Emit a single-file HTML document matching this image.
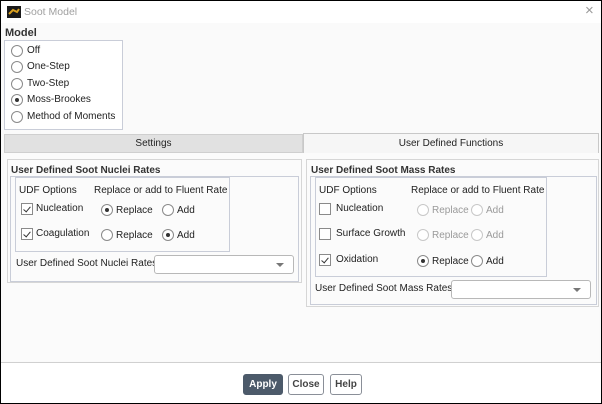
<!DOCTYPE html>
<html><head><meta charset="utf-8"><style>
*{box-sizing:border-box;margin:0;padding:0}
body{width:602px;height:404px;overflow:hidden;font-family:"Liberation Sans","DejaVu Sans",sans-serif;font-size:10px;color:#222;background:#000}
#w{position:absolute;left:0;top:0;width:602px;height:404px;border:1px solid #000;background:#fafafa}
.a{position:absolute;white-space:nowrap}
.box{position:absolute;border:1px solid #c9cdd8}
.r{position:absolute;width:12px;height:12px;border:1px solid #8a8a8a;border-radius:50%;background:#fff}
.r.on::after{content:"";position:absolute;left:3px;top:3px;width:4px;height:4px;border-radius:50%;background:#333}
.r.dis{border-color:#c8c8c8}
.c{position:absolute;width:12px;height:12px;border:1px solid #8a8a8a;background:#fff}
.c.k::after{content:"";position:absolute;left:3px;top:1px;width:3px;height:6px;border:solid #333;border-width:0 1.5px 1.5px 0;transform:rotate(40deg)}
.g{color:#9a9a9a}
.b{font-weight:bold;color:#333}
.dd{position:absolute;height:19px;border:1px solid #b8b8b8;border-radius:3px;background:#fff}
.dd::after{content:"";position:absolute;right:9px;top:7px;border-left:4px solid transparent;border-right:4px solid transparent;border-top:4px solid #777}
.btn{position:absolute;top:373px;height:21px;border:1px solid #8a8f98;border-radius:3px;background:#fff;font-weight:bold;text-align:center;line-height:19px;color:#444}
</style></head><body><div id="w">
<div class="a" style="left:0;top:0;width:600px;height:22px;background:#fff"></div>
<svg class="a" style="left:6px;top:5px" width="14" height="12"><rect width="14" height="12" fill="#1a1a1a"/><path d="M2 8 L6 4 L10 6 L12 3" stroke="#d9a020" stroke-width="2" fill="none"/></svg>
<div class="a" style="left:23px;top:5px;color:#a0a0a0;font-size:10.5px">Soot Model</div>
<div class="a" style="left:584px;top:1px;color:#999;font-size:15px">×</div>

<div class="a b" style="left:4px;top:26px;font-size:11px">Model</div>
<div class="box" style="left:3px;top:39px;width:119px;height:90px;background:#fff"></div>
<div class="r" style="left:10px;top:44px"></div><div class="a" style="left:26px;top:44px">Off</div>
<div class="r" style="left:10px;top:60px"></div><div class="a" style="left:26px;top:60px">One-Step</div>
<div class="r" style="left:10px;top:77px"></div><div class="a" style="left:26px;top:77px">Two-Step</div>
<div class="r on" style="left:10px;top:93px"></div><div class="a" style="left:26px;top:93px">Moss-Brookes</div>
<div class="r" style="left:10px;top:110px"></div><div class="a" style="left:26px;top:110px">Method of Moments</div>

<div class="a" style="left:3px;top:133px;width:299px;height:19px;background:#e1e1e1;border:1px solid #cfcfcf;text-align:center;line-height:17px">Settings</div>
<div class="a" style="left:302px;top:132px;width:296px;height:20px;background:#f6f6f6;border:1px solid #c8c8c8;border-bottom:none;text-align:center;line-height:19px">User Defined Functions</div>
<div class="a" style="left:3px;top:152px;width:595px;height:208px;background:#fbfbfb"></div>

<div class="box" style="left:6px;top:158px;width:295px;height:124px;border-color:#d6d6d6"></div>
<div class="a b" style="left:10px;top:164px">User Defined Soot Nuclei Rates</div>
<div class="box" style="left:9px;top:175px;width:289px;height:106px"></div>
<div class="box" style="left:14px;top:176px;width:215px;height:75px"></div>
<div class="a" style="left:18px;top:184px">UDF Options</div>
<div class="a" style="left:93px;top:184px">Replace or add to Fluent Rate</div>
<div class="c k" style="left:20px;top:202px"></div><div class="a" style="left:35px;top:202px">Nucleation</div>
<div class="r on" style="left:100px;top:203px"></div><div class="a" style="left:115px;top:204px">Replace</div>
<div class="r" style="left:161px;top:203px"></div><div class="a" style="left:176px;top:204px">Add</div>
<div class="c k" style="left:20px;top:227px"></div><div class="a" style="left:35px;top:227px">Coagulation</div>
<div class="r" style="left:100px;top:228px"></div><div class="a" style="left:115px;top:229px">Replace</div>
<div class="r on" style="left:161px;top:228px"></div><div class="a" style="left:176px;top:229px">Add</div>
<div class="a" style="left:15px;top:257px">User Defined Soot Nuclei Rates</div>
<div class="dd" style="left:153px;top:254px;width:140px"></div>

<div class="box" style="left:305px;top:158px;width:293px;height:148px;border-color:#d6d6d6"></div>
<div class="a b" style="left:310px;top:164px">User Defined Soot Mass Rates</div>
<div class="box" style="left:309px;top:175px;width:287px;height:129px"></div>
<div class="box" style="left:314px;top:176px;width:232px;height:100px"></div>
<div class="a" style="left:318px;top:184px">UDF Options</div>
<div class="a" style="left:410px;top:184px">Replace or add to Fluent Rate</div>
<div class="c" style="left:318px;top:202px"></div><div class="a" style="left:335px;top:202px">Nucleation</div>
<div class="r dis" style="left:416px;top:203px"></div><div class="a g" style="left:431px;top:204px">Replace</div>
<div class="r dis" style="left:470px;top:203px"></div><div class="a g" style="left:485px;top:204px">Add</div>
<div class="c" style="left:318px;top:227px"></div><div class="a" style="left:335px;top:227px">Surface Growth</div>
<div class="r dis" style="left:416px;top:228px"></div><div class="a g" style="left:431px;top:229px">Replace</div>
<div class="r dis" style="left:470px;top:228px"></div><div class="a g" style="left:485px;top:229px">Add</div>
<div class="c k" style="left:318px;top:253px"></div><div class="a" style="left:335px;top:253px">Oxidation</div>
<div class="r on" style="left:416px;top:254px"></div><div class="a" style="left:431px;top:255px">Replace</div>
<div class="r" style="left:470px;top:254px"></div><div class="a" style="left:485px;top:255px">Add</div>
<div class="a" style="left:314px;top:282px">User Defined Soot Mass Rates</div>
<div class="dd" style="left:450px;top:279px;width:140px"></div>

<div class="a" style="left:0;top:361px;width:600px;height:1px;background:#d0d0d0"></div>
<div class="a" style="left:0;top:362px;width:600px;height:40px;background:#fff"></div>
<div class="btn" style="left:242px;width:40px;background:#4c5a6a;border-color:#4c5a6a;color:#fff">Apply</div>
<div class="btn" style="left:287px;width:36px">Close</div>
<div class="btn" style="left:329px;width:32px">Help</div>
</div></body></html>
